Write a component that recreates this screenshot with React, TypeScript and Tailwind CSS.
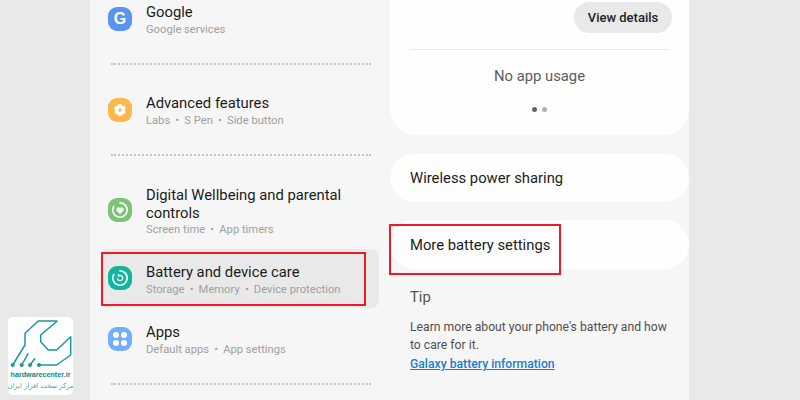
const Divider = () => <div className="ml-[21px] w-[260px] border-t-2 border-dotted border-[#c4c4c4]" />;

const Icon = ({ bg, children }: { bg: string; children: React.ReactNode }) => (
  <div className={`w-6 h-6 mb-[3px] rounded-[9px] flex items-center justify-center shrink-0 ${bg}`}>{children}</div>
);

const Row = ({ icon, title, sub }: { icon: React.ReactNode; title: React.ReactNode; sub: string[] }) => (
  <div className="flex items-center pl-[18px]">
    {icon}
    <div className="ml-[14px]">
      <div className="text-[14.8px] leading-[18px] text-[#1c1c1c]">{title}</div>
      <div className="mt-[1px] -mb-[1px] text-[11.2px] leading-4 text-[#a0a0a0] flex">
        {sub.map((s, i) => (
          <span key={s}>
            {i > 0 && <span className="mx-[5.2px]">•</span>}
            {s}
          </span>
        ))}
      </div>
    </div>
  </div>
);

const Logo = () => (
  <div className="w-[65px] h-[78px] bg-white rounded-[5px] flex flex-col items-center overflow-hidden">
    <svg viewBox="0 0 65 50" className="w-[65px] h-[50px] shrink-0" fill="none" stroke="#1b97a0" strokeWidth="1.5" strokeLinejoin="round">
      <path d="M49.300 4H30.300L17 16.300V28L4.700 48" />
      <path d="M13.700 48L20.300 36.300" />
      <path d="M22 48L27 41.300" />
      <path d="M31 48H48.700L62.700 38V19.700L48.700 33H40.300L32.700 24.700V18L49.300 4" />
      <circle cx="4.700" cy="48" r="2" fill="#1b97a0" stroke="none" />
      <circle cx="13.700" cy="48" r="2" fill="#1b97a0" stroke="none" />
      <circle cx="22" cy="48" r="2" fill="#1b97a0" stroke="none" />
      <circle cx="31" cy="48" r="2" fill="#1b97a0" stroke="none" />
    </svg>
    <div className="text-[7.2px] leading-[12px] mt-[2px] font-bold text-[#14828c] whitespace-nowrap font-['Liberation_Sans',sans-serif]">hardwarecenter.ir</div>
    <div dir="rtl" className="text-[6.8px] leading-[10px] text-[#3fa9a9] whitespace-nowrap font-['DejaVu_Sans',sans-serif]">مرکز سخت افزار ایران</div>
  </div>
);

const Ring = ({ children }: { children?: React.ReactNode }) => (
  <svg viewBox="0 0 24 24" className="w-6 h-6" fill="none" stroke="#fff">
    <path d="M12 4.800A7.200 7.200 0 1 1 5.700 8.500" strokeWidth="1.700" strokeLinecap="round" />
    {children}
  </svg>
);

export default function App() {
  return (
    <div className="relative w-[800px] h-[400px] overflow-hidden flex bg-[#e9e9e9] font-['Roboto',sans-serif]">
      <div className="w-[90px] flex flex-col justify-end pl-2 pb-[5px]">
        <Logo />
      </div>
      <div className="w-[599px] flex bg-[#f6f6f6]">
        <div className="w-[300px] pt-[3px]">
          <Row
            icon={
              <Icon bg="bg-[#5b94ef]">
                <span className="text-white text-[16px] font-bold font-['Liberation_Sans',sans-serif]">G</span>
              </Icon>
            }
            title="Google"
            sub={["Google services"]}
          />
          <div className="mt-[26px] mb-[29px]"><Divider /></div>
          <Row
            icon={
              <Icon bg="bg-[#fcb74f]">
                <svg viewBox="0 0 24 24" className="w-6 h-6">
                  <g fill="#fff">
                    <circle cx="12" cy="8.500" r="2.500" />
                    <circle cx="12" cy="15.500" r="2.500" />
                    <circle cx="9" cy="10.300" r="2.500" />
                    <circle cx="15" cy="10.300" r="2.500" />
                    <circle cx="9" cy="13.700" r="2.500" />
                    <circle cx="15" cy="13.700" r="2.500" />
                  </g>
                  <path d="M12 10v4M10 12h4" stroke="#fcb74f" strokeWidth="1.200" />
                </svg>
              </Icon>
            }
            title="Advanced features"
            sub={["Labs", "S Pen", "Side button"]}
          />
          <div className="mt-[26px] mb-[30px]"><Divider /></div>
          <Row
            icon={
              <Icon bg="bg-[#7cc374]">
                <Ring>
                  <path d="M12 16l-3.300-3.300a2 2 0 0 1 3.300-2.400 2 2 0 0 1 3.300 2.400z" fill="#fff" stroke="none" />
                </Ring>
              </Icon>
            }
            title={<span className="block -mb-[1px]">Digital Wellbeing and parental<br />controls</span>}
            sub={["Screen time", "App timers"]}
          />
          <div className="mt-[12px] ml-[11px] w-[278px] h-[59px] pt-[2px] bg-[#e9e9e9] rounded-[8px] flex items-center [&>div]:pl-[7px]">
            <Row
              icon={
                <Icon bg="bg-[#12b5a0]">
                  <Ring>
                    <path d="M9.300 12a2.700 2.700 0 1 0 1.100-2.200M10.400 8v2h2" strokeWidth="1.200" />
                  </Ring>
                </Icon>
              }
              title="Battery and device care"
              sub={["Storage", "Memory", "Device protection"]}
            />
          </div>
          <div className="mt-[15px]">
            <Row
              icon={
                <Icon bg="bg-[#73aefb]">
                  <div className="grid grid-cols-2 gap-[2px]">
                    <span className="w-[6px] h-[6px] rounded-full bg-white" />
                    <span className="w-[6px] h-[6px] rounded-full bg-white" />
                    <span className="w-[6px] h-[6px] rounded-full bg-white" />
                    <span className="w-[6px] h-[6px] rounded-full bg-white" />
                  </div>
                </Icon>
              }
              title="Apps"
              sub={["Default apps", "App settings"]}
            />
          </div>
          <div className="mt-[26px]"><Divider /></div>
        </div>
        <div className="w-[299px]">
          <div className="h-[135px] bg-[#fefefe] rounded-b-[26px] px-5 flex flex-col">
            <div className="self-end mt-[2px] h-[31px] w-[98px] -mr-[3px] pt-[1px] rounded-full bg-[#e9e9e9] flex items-center justify-center text-[13px] font-medium text-[#222]">View details</div>
            <div className="mt-4 border-t border-[#e6e6e6]" />
            <div className="mt-[17px] text-[14.8px] leading-[18px] text-[#5c5c5c] text-center">No app usage</div>
            <div className="mt-[22px] flex justify-center gap-[5px]">
              <span className="w-[5px] h-[5px] rounded-full bg-[#666]" />
              <span className="w-[5px] h-[5px] rounded-full bg-[#b0b0b0]" />
            </div>
          </div>
          <div className="mt-[19px] h-12 pt-[1px] bg-[#fefefe] rounded-[26px] px-5 flex items-center text-[14.8px] text-[#1c1c1c]">Wireless power sharing</div>
          <div className="mt-[18px] h-[49px] pt-[1px] bg-[#fefefe] rounded-[26px] px-5 flex items-center text-[14.8px] text-[#1c1c1c]">More battery settings</div>
          <div className="px-5">
            <div className="mt-[19px] text-[14.8px] leading-[18px] text-[#555]">Tip</div>
            <div className="mt-[12px] text-[12.2px] leading-[18px] text-[#505050] whitespace-nowrap">Learn more about your phone's battery and how<br />to care for it.</div>
            <div className="mt-[1px] text-[12.2px] leading-[18px] font-medium text-[#1a7fd1] underline">Galaxy battery information</div>
          </div>
        </div>
      </div>
      <div className="absolute left-[101px] top-[252px] w-[265px] h-[54px] border-2 border-[#ed1c24]" />
      <div className="absolute left-[389px] top-[224px] w-[172px] h-[51px] border-2 border-[#ed1c24]" />
    </div>
  );
}
